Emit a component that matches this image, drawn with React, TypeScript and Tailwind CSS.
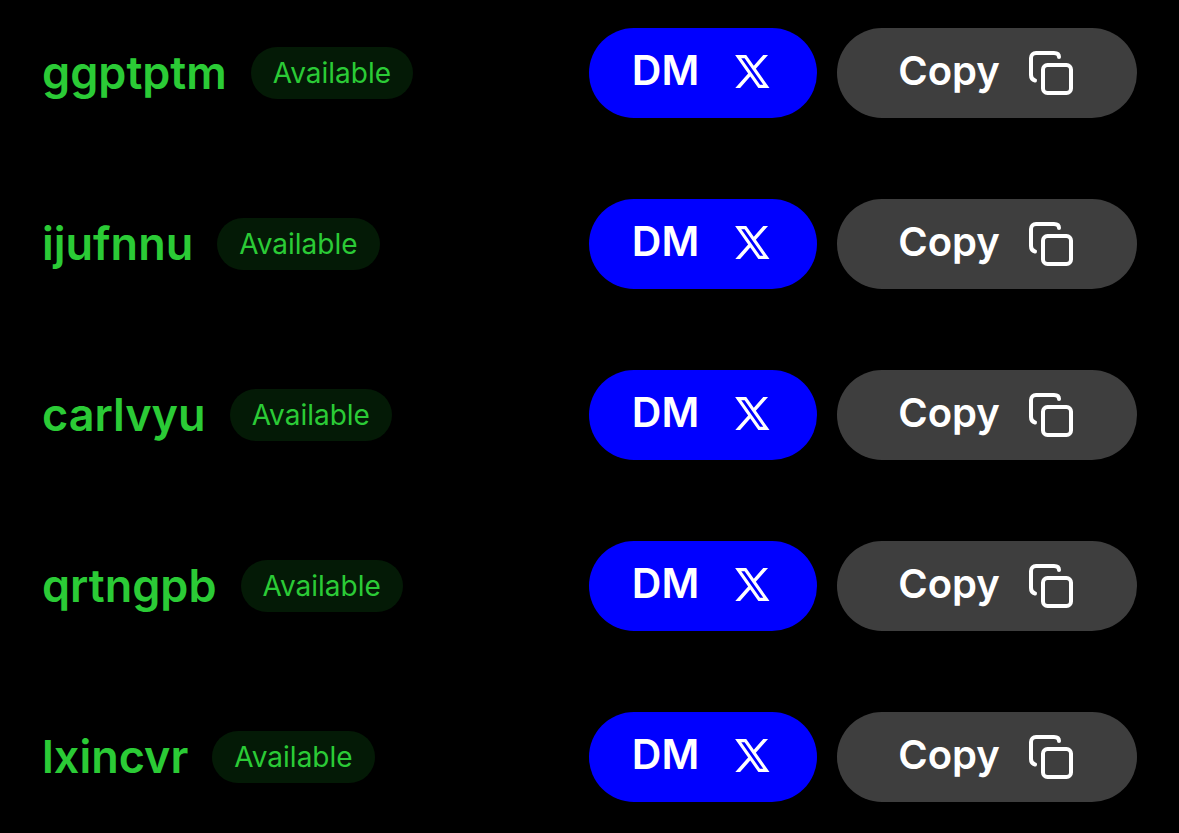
const handles = ["ggptptm", "ijufnnu", "carlvyu", "qrtngpb", "lxincvr"];

function XLogo() {
  return (
    <svg width="39" height="33" viewBox="0 0 39 33" fill="none" stroke="white" strokeWidth="3.2" aria-hidden="true">
      <path d="M3.2 1.6h7.2l21 29.8h-7.200z" />
      <path d="M32.4-2 18.600 13.600M15.600 18.400 0.500 35.500" strokeWidth="3.600" />
    </svg>
  );
}

function CopyIcon() {
  return (
    <svg width="48" height="46" viewBox="0 0 48 46" fill="none" stroke="white" strokeWidth="4" strokeLinecap="round" aria-hidden="true">
      <rect x="15" y="15" width="28" height="28" rx="4.500" />
      <path d="M7 30.500C4 29.800 3 28 3 25V8a5 5 0 0 1 5-5h18c3.200 0 5 1.500 5 4" />
    </svg>
  );
}

function HandleRow({ name }: { name: string }) {
  return (
    <li className="flex items-center justify-between">
      <div className="flex items-center gap-6">
        <span className="pb-0.5 text-[45px] leading-none font-semibold text-[#2bcb36]">{name}</span>
        <span className="flex h-13 items-center rounded-full bg-[#041a06] px-[22px] text-[28px] text-[#2bcb36]">Available</span>
      </div>
      <div className="flex items-center gap-5">
        <button type="button" className="flex h-[90px] w-[228px] items-center justify-center gap-9 rounded-full bg-[#0000ff] pb-1 text-[41px] font-semibold text-white">
          DM
          <XLogo />
        </button>
        <button type="button" className="flex h-[90px] w-[300px] items-center justify-center gap-7 rounded-full bg-[#3e3e3e] text-[40px] font-semibold text-white">
          <span className="pb-1">Copy</span>
          <CopyIcon />
        </button>
      </div>
    </li>
  );
}

export default function App() {
  return (
    <main className="min-h-screen bg-black px-[42px] pt-7 pb-8 font-['Inter',sans-serif]">
      <ul className="flex flex-col gap-[81px]">
        {handles.map((name) => (
          <HandleRow key={name} name={name} />
        ))}
      </ul>
    </main>
  );
}
